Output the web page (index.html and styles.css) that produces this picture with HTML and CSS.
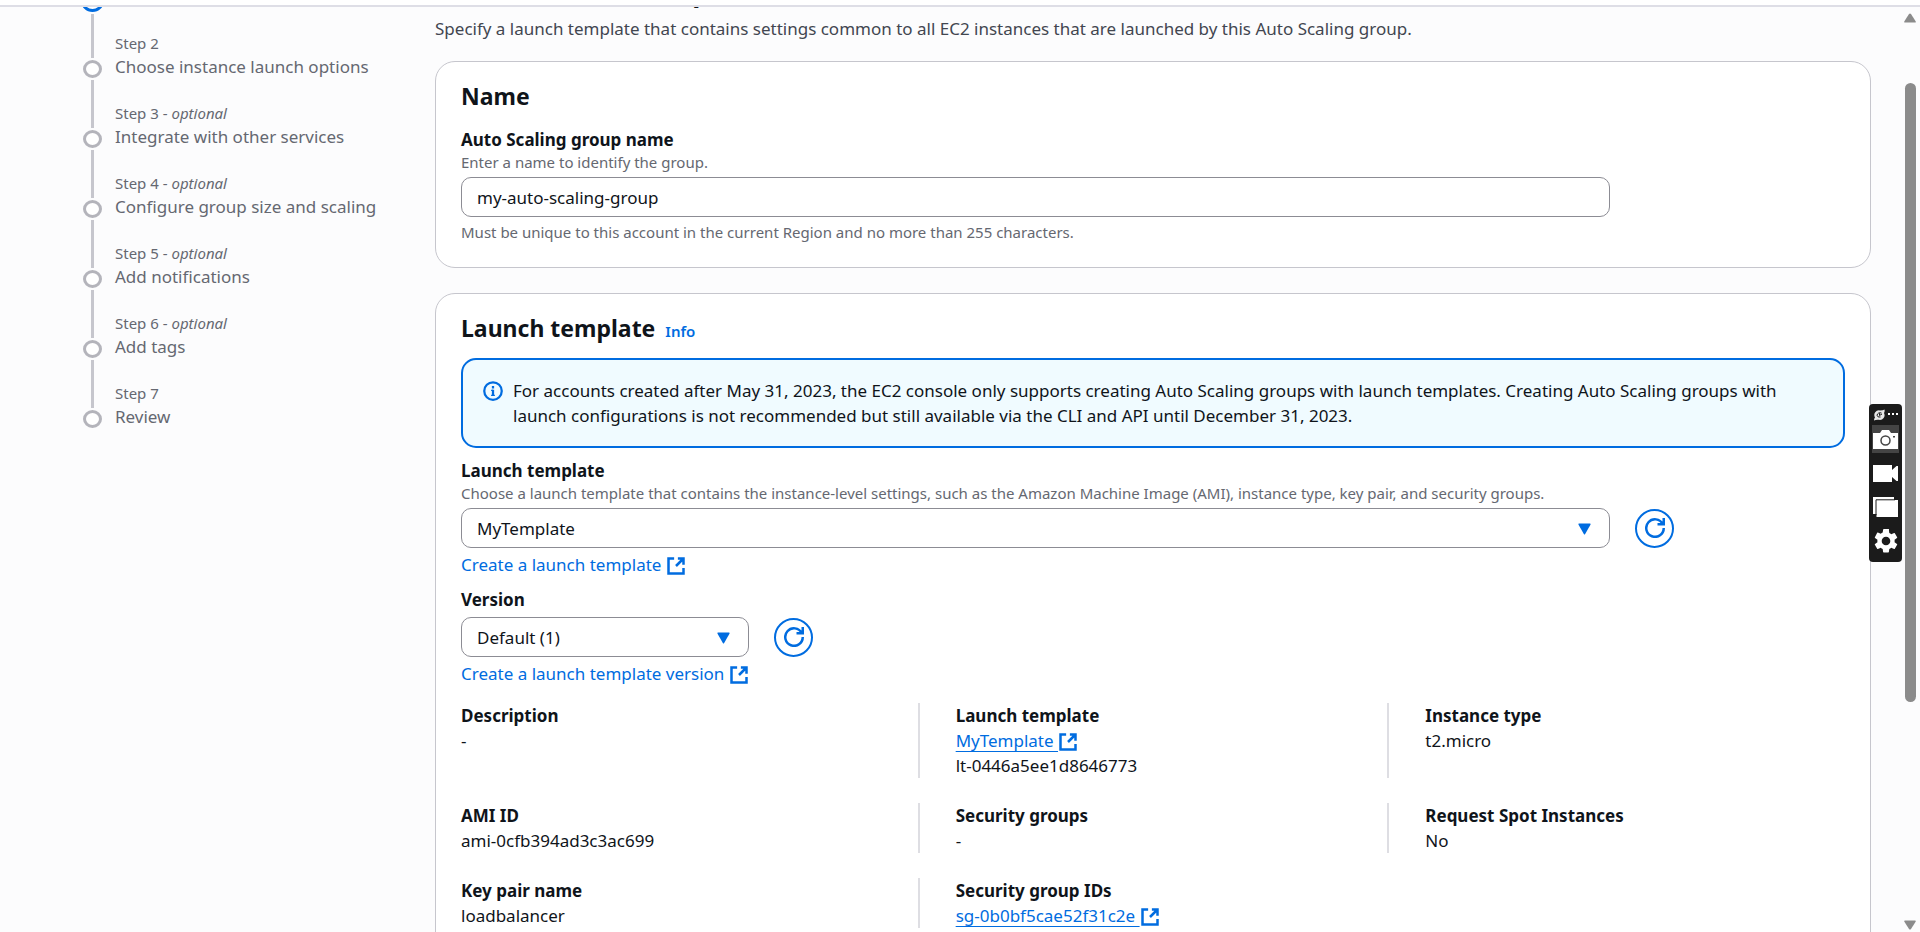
FILE: index.html
```html
<!DOCTYPE html>
<html lang="en">
<head>
<meta charset="utf-8">
<title>Create Auto Scaling group</title>
<link rel="stylesheet" href="styles.css">
</head>
<body>
<svg class="defs" aria-hidden="true">
  <symbol id="external" viewBox="0 0 16 16"><path d="M9.500 2H14v5M8 8l6-6M14 9.500V14H2V2h4.500" fill="none" stroke="currentColor" stroke-width="2"/></symbol>
  <symbol id="refresh" viewBox="0 0 16 16"><path d="M10 5h5V0M15 8a7 7 0 1 1-.8-3.2" fill="none" stroke="currentColor" stroke-width="2"/></symbol>
  <symbol id="caret" viewBox="0 0 12 11"><path d="M1 .5h10q1 0 .5 1L6.6 10q-.6 1-1.200 0L.5 1.500q-.5-1 .5-1z" fill="currentColor"/></symbol>
</svg>
<header class="topbar"></header>
<div class="viewport">
  <div class="page">
    <nav class="steps" aria-label="Steps">
      <ol class="step-list">
        <li class="step active"><span class="rail"><i class="line-in"></i><i class="dot"></i><i class="line-out"></i></span><div><div class="step-label">Step 1</div><div class="step-title">Choose launch template</div></div></li>
        <li class="step"><span class="rail"><i class="line-in"></i><i class="dot"></i><i class="line-out"></i></span><div><div class="step-label">Step 2</div><div class="step-title">Choose instance launch options</div></div></li>
        <li class="step"><span class="rail"><i class="line-in"></i><i class="dot"></i><i class="line-out"></i></span><div><div class="step-label">Step 3 - <em>optional</em></div><div class="step-title">Integrate with other services</div></div></li>
        <li class="step"><span class="rail"><i class="line-in"></i><i class="dot"></i><i class="line-out"></i></span><div><div class="step-label">Step 4 - <em>optional</em></div><div class="step-title">Configure group size and scaling</div></div></li>
        <li class="step"><span class="rail"><i class="line-in"></i><i class="dot"></i><i class="line-out"></i></span><div><div class="step-label">Step 5 - <em>optional</em></div><div class="step-title">Add notifications</div></div></li>
        <li class="step"><span class="rail"><i class="line-in"></i><i class="dot"></i><i class="line-out"></i></span><div><div class="step-label">Step 6 - <em>optional</em></div><div class="step-title">Add tags</div></div></li>
        <li class="step"><span class="rail"><i class="line-in"></i><i class="dot"></i></span><div><div class="step-label">Step 7</div><div class="step-title">Review</div></div></li>
      </ol>
    </nav>
    <main class="content">
      <h1 class="page-title">Choose launch template</h1>
      <p class="page-desc">Specify a launch template that contains settings common to all EC2 instances that are launched by this Auto Scaling group.</p>

      <section class="card">
        <h2 class="card-title">Name</h2>
        <div class="field name-field">
          <label class="label" for="group-name">Auto Scaling group name</label>
          <p class="hint">Enter a name to identify the group.</p>
          <div class="row"><input class="control wide" id="group-name" type="text" value="my-auto-scaling-group"></div>
          <p class="hint below">Must be unique to this account in the current Region and no more than 255 characters.</p>
        </div>
      </section>

      <section class="card">
        <h2 class="card-title">Launch template <a class="info" href="#info">Info</a></h2>
        <div class="alert">
          <svg class="icon" viewBox="0 0 16 16" aria-hidden="true"><circle cx="8" cy="8" r="7" fill="none" stroke="currentColor" stroke-width="1.800"/><path d="M8 7v5M8 4v2" stroke="currentColor" stroke-width="1.800"/><path d="M6.500 7.500H8M6.500 11.500h3" stroke="currentColor"/></svg>
          <p class="alert-text">For accounts created after May 31, 2023, the EC2 console only supports creating Auto Scaling groups with launch templates. Creating Auto Scaling groups with launch configurations is not recommended but still available via the CLI and API until December 31, 2023.</p>
        </div>
        <div class="field">
          <label class="label" for="template">Launch template</label>
          <p class="hint">Choose a launch template that contains the instance-level settings, such as the Amazon Machine Image (AMI), instance type, key pair, and security groups.</p>
          <div class="row">
            <div class="select-wrap wide"><select class="control" id="template"><option>MyTemplate</option></select><svg class="caret" aria-hidden="true"><use href="#caret"/></svg></div>
            <button class="refresh" type="button" aria-label="Refresh launch templates"><svg class="icon"><use href="#refresh"/></svg></button>
          </div>
          <a class="link" href="#create">Create a launch template <svg class="icon"><use href="#external"/></svg></a>
        </div>
        <div class="field">
          <label class="label" for="version">Version</label>
          <div class="row">
            <div class="select-wrap narrow"><select class="control" id="version"><option>Default (1)</option></select><svg class="caret" aria-hidden="true"><use href="#caret"/></svg></div>
            <button class="refresh" type="button" aria-label="Refresh versions"><svg class="icon"><use href="#refresh"/></svg></button>
          </div>
          <a class="link" href="#create-version">Create a launch template version <svg class="icon"><use href="#external"/></svg></a>
        </div>
        <dl class="details">
          <div class="cell"><dt>Description</dt><dd>-</dd></div>
          <div class="cell"><dt>Launch template</dt><dd><a class="link underlined" href="#template">MyTemplate <svg class="icon"><use href="#external"/></svg></a></dd><dd>lt-0446a5ee1d8646773</dd></div>
          <div class="cell"><dt>Instance type</dt><dd>t2.micro</dd></div>
          <div class="cell"><dt>AMI ID</dt><dd>ami-0cfb394ad3c3ac699</dd></div>
          <div class="cell"><dt>Security groups</dt><dd>-</dd></div>
          <div class="cell"><dt>Request Spot Instances</dt><dd>No</dd></div>
          <div class="cell"><dt>Key pair name</dt><dd>loadbalancer</dd></div>
          <div class="cell"><dt>Security group IDs</dt><dd><a class="link underlined" href="#sg">sg-0b0bf5cae52f31c2e <svg class="icon"><use href="#external"/></svg></a></dd></div>
        </dl>
      </section>
    </main>
  </div>
  <div class="scrollbar" aria-hidden="true">
    <svg class="arrow" viewBox="0 0 12 10"><path d="M1 9.500h10q1.200 0 .6-1.200L7 1Q6 0 5 1L.4 8.300Q-.2 9.500 1 9.500z" fill="#8b8b8b"/></svg>
    <div class="track"><div class="thumb"></div></div>
    <svg class="arrow" viewBox="0 0 12 10"><path d="M1 .5h10q1.200 0 .6 1.200L7 9Q6 10 5 9L.4 1.700Q-.2.5 1 .5z" fill="#8b8b8b"/></svg>
  </div>
</div>
<div class="recorder" role="toolbar" aria-label="Screen capture">
  <div class="recorder-head">
    <svg width="11" height="12" viewBox="0 0 11 12"><path d="M0 11.500Q0 9.500 1 8.500A4.700 4.700 0 0 1 6 1.500Q9 1.500 10.500.5q.5 2-.5 3.500A4.700 4.700 0 0 1 5 10.800Q2 10.500 0 11.500z" fill="#e8e8e8"/><path d="M7.500 4Q4 3 3 6.200 3.500 8.700 6.500 8M5.500 4.200V6.500L8 5" fill="none" stroke="#1b1b1b"/></svg>
    <svg width="11" height="3" viewBox="0 0 11 3"><path d="M0 0h2v2H0zM4 0h2v2H4zM8 0h2v2H8z" fill="#fff"/></svg>
  </div>
  <button class="tool selected" type="button" aria-label="Screenshot"><svg width="25" height="19" viewBox="0 0 25 19"><path d="M0 3h7l2-3h7l2 3h7v16H0z" fill="#fff"/><circle cx="12.500" cy="10.500" r="4.500" fill="#fff" stroke="#444" stroke-width="1.500"/><path d="M20 6h2v1.500h-2z" fill="#444"/></svg></button>
  <button class="tool" type="button" aria-label="Record"><svg width="25" height="17" viewBox="0 0 25 17"><path d="M0 0h19v5l4.500-4H25v15h-1.500L19 12v5H0z" fill="#fff"/></svg></button>
  <button class="tool" type="button" aria-label="Gallery"><svg width="25" height="20" viewBox="0 0 25 20"><path d="M0 0h21v17H0zM3.500 3H25v17H3.500z" fill="#fff"/><path d="M3 18V2.800h19" fill="none" stroke="#1b1b1b"/></svg></button>
  <button class="tool" type="button" aria-label="Settings"><svg width="24" height="24" viewBox="2 2 20 20"><path fill="#fff" fill-rule="evenodd" d="M19.140 12.940c.04-.3.060-.61.060-.94s-.02-.64-.07-.94l2.030-1.580a.49.49 0 0 0 .12-.61l-1.920-3.320a.49.49 0 0 0-.59-.22l-2.390.96a7 7 0 0 0-1.620-.94l-.36-2.540A.48.48 0 0 0 13.920 2h-3.840a.48.48 0 0 0-.47.410l-.36 2.540c-.59.240-1.130.570-1.620.940l-2.390-.96a.49.49 0 0 0-.59.220L2.740 8.870a.47.470 0 0 0 .12.610l2.030 1.580c-.05.3-.09.630-.09.940s.02.640.07.940l-2.030 1.580a.49.49 0 0 0-.12.610l1.920 3.320c.12.220.37.290.59.220l2.390-.96c.5.380 1.030.7 1.620.940l.36 2.540c.05.240.24.410.480.410h3.840c.24 0 .44-.17.470-.41l.36-2.540c.59-.24 1.130-.56 1.620-.94l2.390.96c.22.080.47 0 .59-.22l1.920-3.320a.47.470 0 0 0-.12-.61zM12 15.600a3.600 3.600 0 1 1 0-7.200 3.600 3.600 0 0 1 0 7.200z"/></svg></button>
</div>
</body>
</html>
```
FILE: styles.css
```css
* { box-sizing: border-box; }

body {
  margin: 0;
  height: 100vh;
  display: flex;
  flex-direction: column;
  overflow: hidden;
  background: #fcfcfd;
  color: #0f141a;
  font: 17px/25px "Noto Sans", "Open Sans", sans-serif;
}

h1, h2, p, dl, dd, ol { margin: 0; padding: 0; }
.defs { display: none; }

.topbar {
  flex: none;
  height: 7px;
  background: #fff;
  border-bottom: 2px solid #dedee6;
}

.viewport {
  flex: 1;
  min-height: 0;
  display: flex;
  overflow: hidden;
}

/* The page is shown scrolled past the top of its heading. */
.page {
  flex: 1;
  display: grid;
  grid-template-columns: 435px 1fr;
  align-items: start;
  margin-top: -44px;
}

.steps { padding-left: 81px; }
.step-list { list-style: none; }
.step {
  display: flex;
  gap: 11px;
  min-height: 70px;
  color: #656871;
}
.rail {
  width: 23px;
  display: flex;
  flex-direction: column;
  align-items: center;
  gap: 2px;
}
.line-in { width: 3px; height: 25px; background: #c6c6cd; }
.line-out { width: 3px; flex: 1; background: #c6c6cd; }
.dot {
  width: 19px;
  height: 18px;
  border: 3px solid #b4b4bb;
  border-radius: 50%;
  background: #fff;
}
.active .dot { width: 23px; height: 22px; border-color: #006ce0; }
.step-label { font-size: 15px; line-height: 20px; }
.step-title { line-height: 28px; }
.active .step-title { color: #006ce0; font-weight: 600; }

.content { padding-right: 29px; }
.page-title { padding-top: 4px; font-size: 27px; line-height: 49px; }
.page-desc { color: #424650; }

.card {
  margin-top: 20px;
  padding: 19px 25px 25px;
  background: #fff;
  border: 1px solid #c6c6cd;
  border-radius: 20px;
}
.card + .card { margin-top: 25px; }
.card-title { font-size: 23px; line-height: 30px; }
.info {
  margin-left: 4px;
  font-size: 15px;
  font-weight: 600;
  line-height: 20px;
  color: #006ce0;
  text-decoration: none;
}

.field { padding-top: 10px; }
.name-field { padding-top: 16px; }
.label { display: block; font-weight: 700; }
.hint { font-size: 15px; line-height: 20px; color: #656871; }
.below { padding-top: 5px; }

/* Twelve-column form grid. */
.row {
  display: grid;
  grid-template-columns: repeat(12, 1fr);
  column-gap: 25px;
  align-items: center;
  padding-top: 5px;
}
.wide { grid-column: span 10; }
.narrow { grid-column: span 3; margin-right: 39px; }
.narrow + .refresh { margin-left: -39px; }

.control {
  display: block;
  width: 100%;
  height: 40px;
  padding: 0 15px;
  border: 1px solid #8c8c94;
  border-radius: 10px;
  background: #fff;
  color: #0f141a;
  font: inherit;
  appearance: none;
}
.select-wrap { position: relative; }
.caret {
  position: absolute;
  right: 19px;
  top: 15px;
  width: 13px;
  height: 12px;
  color: #006ce0;
  pointer-events: none;
}

.icon { width: 20px; height: 20px; flex: none; }
.refresh {
  display: flex;
  align-items: center;
  justify-content: center;
  width: 39px;
  height: 39px;
  padding: 0;
  border: 2px solid #006ce0;
  border-radius: 50%;
  background: #fff;
  color: #006ce0;
}

.alert {
  display: flex;
  gap: 10px;
  margin-top: 15px;
  padding: 18px 60px 18px 20px;
  border: 2px solid #006ce0;
  border-radius: 15px;
  background: #f0fbff;
}
.alert .icon { margin-top: 3px; color: #006ce0; }

.link { color: #006ce0; text-decoration: none; }
.link .icon { vertical-align: -5px; }
.underlined { text-decoration: underline; text-underline-offset: 4px; }
.field > .link { display: block; padding-top: 4px; }

.details {
  display: grid;
  grid-template-columns: 457fr 470fr 458fr;
  row-gap: 25px;
  padding-top: 17px;
}
.cell { padding-left: 36px; border-left: 2px solid #dedee3; }
.cell:nth-child(3n + 1) { padding-left: 0; border-left: 0; }
.cell dt { font-weight: 700; }

.scrollbar {
  width: 20px;
  display: flex;
  flex-direction: column;
  align-items: center;
  padding: 6px 0 2px;
}
.arrow { width: 12px; height: 10px; flex: none; }
.track { flex: 1; padding-top: 60px; }
.thumb { width: 11px; height: 74%; min-height: 40px; border-radius: 6px; background: #8b8b8b; }

/* Floating capture toolbar, docked over the right edge. */
.recorder {
  position: fixed;
  right: 18px;
  top: 404px;
  width: 33px;
  padding: 4px 3px 7px;
  border-radius: 4px;
  background: #1b1b1b;
}
.recorder-head {
  display: flex;
  align-items: center;
  justify-content: space-between;
  height: 13px;
  padding: 0 0 0 2px;
}
.tool {
  display: flex;
  align-items: center;
  justify-content: center;
  width: 27px;
  height: 28px;
  margin-bottom: 6px;
  padding: 0;
  border: 0;
  background: transparent;
}
.tool:last-child { margin-bottom: 0; }
.selected { margin-top: 4px; background: #444; }
```
